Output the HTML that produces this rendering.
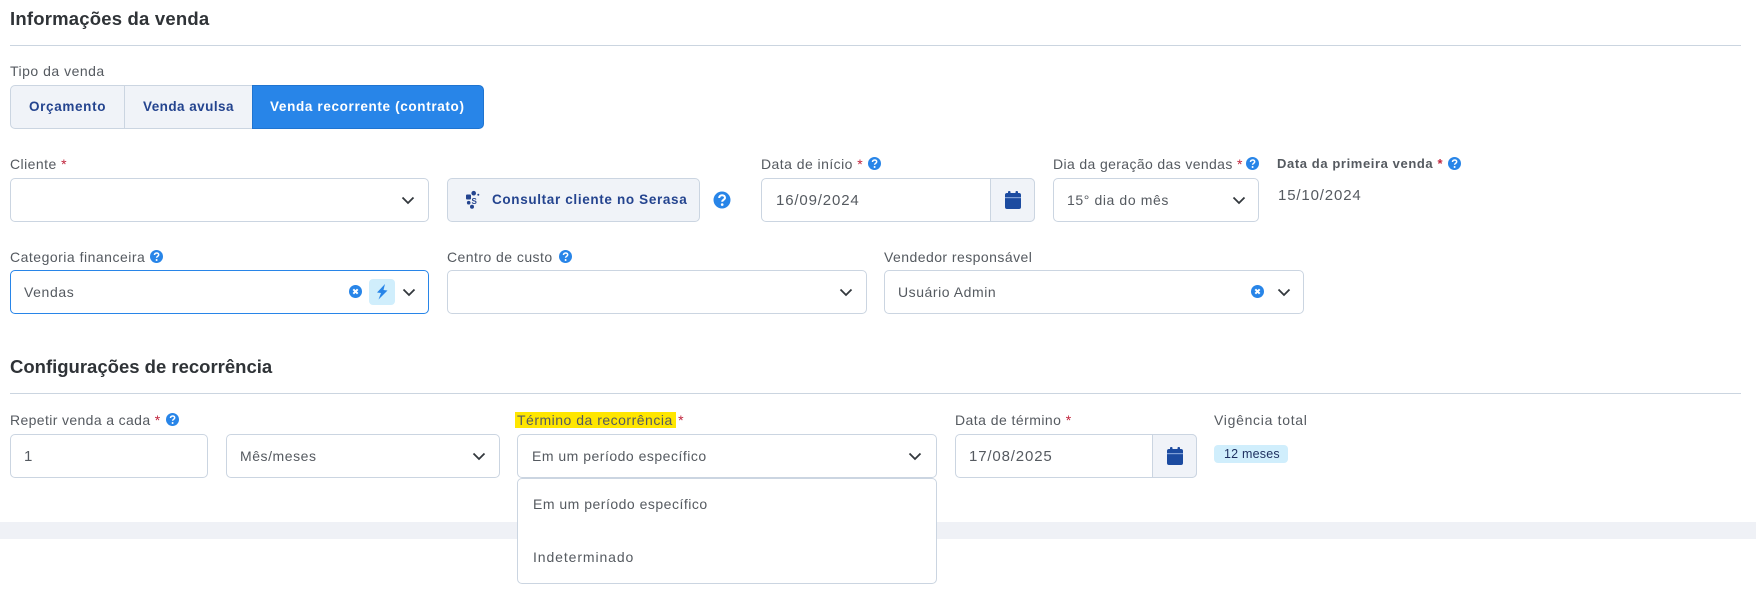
<!DOCTYPE html>
<html lang="pt"><head><meta charset="utf-8"><title>Informações da venda</title>
<style>
html,body{margin:0;padding:0;background:#fff}
#p{position:relative;width:1756px;height:597px;overflow:hidden;background:#fff;font-family:"Liberation Sans",sans-serif;color:#4a4f55}
#p>*{position:absolute;box-sizing:border-box}
.t{white-space:nowrap;font-size:14px;line-height:18px;letter-spacing:.45px;color:#555a60}
.d{font-size:15px;letter-spacing:.85px}
.btn{color:#24448f;font-weight:bold;font-size:13.5px;letter-spacing:.65px}
.h{white-space:nowrap;font-size:18.5px;line-height:24px;color:#2f3337;font-weight:bold}
.r{color:#c0243c}
.l{height:1px;background:#cbd5e0;left:10px;width:1731px}
.b{border:1px solid #cbd5e1;border-radius:5px;background:#fff;height:44px}
.g{background:#f0f3f8}
svg{position:absolute;overflow:visible}
</style></head><body><div id="p">
<div class="h" style="left:10px;top:7px;letter-spacing:.2px">Informações da venda</div>
<div class="l" style="top:45px"></div>
<div class="t" style="left:10px;top:62px;letter-spacing:.5px">Tipo da venda</div>
<div class="b g" style="left:10px;top:85px;width:116px;border-radius:5px 0 0 5px"></div>
<div class="b g" style="left:124px;top:85px;width:129px;border-radius:0"></div>
<div style="left:252px;top:85px;width:232px;height:44px;background:#2885e8;border:1px solid #1f74d0;border-radius:0 5px 5px 0"></div>
<div class="t btn" style="left:29px;top:98px">Orçamento</div>
<div class="t btn" style="left:143px;top:98px;letter-spacing:.45px">Venda avulsa</div>
<div class="t btn" style="left:270px;top:98px;color:#fff">Venda recorrente (contrato)</div>

<div class="t" style="left:10px;top:155px">Cliente <span class="r">*</span></div>
<div class="b" style="left:10px;top:178px;width:419px"></div>
<svg style="left:401px;top:196px" width="14" height="9"><use href="#v"/></svg>
<div class="b g" style="left:447px;top:178px;width:253px"></div>
<svg style="left:465px;top:190px" width="16" height="20"><g fill="#24448f"><rect x="1" y="4.500" width="5" height="5" rx="1"/><circle cx="8.700" cy="3.200" r="2.300"/><circle cx="13.300" cy="4.700" r="1"/><circle cx="3.700" cy="12.700" r="1.800"/><circle cx="7" cy="16.800" r="2"/><text x="6.500" y="14" font-family="Liberation Sans" font-size="8" font-weight="bold">S</text></g></svg>
<div class="t btn" style="left:492px;top:191px">Consultar cliente no Serasa</div>
<svg style="left:713px;top:191px" width="18" height="18"><circle cx="9" cy="9" r="8.500" fill="#2885e8"/><path d="M6.200 7c0-3.700 5.800-3.700 5.800-.2 0 2-2.800 2-2.800 3.900" fill="none" stroke="#fff" stroke-width="2"/><circle cx="9.200" cy="13.600" r="1.300" fill="#fff"/></svg>

<div class="t" style="left:761px;top:155px">Data de início <span class="r">*</span></div>
<svg style="left:868px;top:157px" width="13" height="13"><use href="#q"/></svg>
<div class="b" style="left:761px;top:178px;width:274px"></div>
<div class="b g" style="left:990px;top:178px;width:45px;border-radius:0 5px 5px 0"></div>
<svg style="left:1005px;top:191px" width="16" height="18"><use href="#c"/></svg>
<div class="t d" style="left:776px;top:192px">16/09/2024</div>

<div class="t" style="left:1053px;top:155px;letter-spacing:.37px">Dia da geração das vendas <span class="r">*</span></div>
<svg style="left:1246px;top:157px" width="13" height="13"><use href="#q"/></svg>
<div class="b" style="left:1053px;top:178px;width:206px"></div>
<div class="t" style="left:1067px;top:191px;letter-spacing:.6px">15° dia do mês</div>
<svg style="left:1232px;top:196px" width="14" height="9"><use href="#v"/></svg>

<div class="t" style="left:1277px;top:155px;font-weight:bold;font-size:13px;letter-spacing:.6px">Data da primeira venda <span class="r">*</span></div>
<svg style="left:1448px;top:157px" width="13" height="13"><use href="#q"/></svg>
<div class="t d" style="left:1278px;top:187px">15/10/2024</div>

<div class="t" style="left:10px;top:248px;letter-spacing:.5px">Categoria financeira</div>
<svg style="left:150px;top:250px" width="13" height="13"><use href="#q"/></svg>
<div class="b" style="left:10px;top:270px;width:419px;border-color:#2885e8"></div>
<div class="t" style="left:24px;top:283px;letter-spacing:.6px">Vendas</div>
<svg style="left:349px;top:285px" width="13" height="13"><use href="#x"/></svg>
<div style="left:369px;top:279px;width:26px;height:26px;border-radius:4px;background:#d0eefc"></div>
<svg style="left:375px;top:284px" width="14" height="16"><path d="M10 0L2 8.500l4 .5L3.500 15.500 12.500 6.500 8.500 6z" fill="#2885e8"/></svg>
<svg style="left:402px;top:288px" width="14" height="9"><use href="#v"/></svg>

<div class="t" style="left:447px;top:248px">Centro de custo</div>
<svg style="left:559px;top:250px" width="13" height="13"><use href="#q"/></svg>
<div class="b" style="left:447px;top:270px;width:420px"></div>
<svg style="left:839px;top:288px" width="14" height="9"><use href="#v"/></svg>

<div class="t" style="left:884px;top:248px">Vendedor responsável</div>
<div class="b" style="left:884px;top:270px;width:420px"></div>
<div class="t" style="left:898px;top:283px;letter-spacing:.55px">Usuário Admin</div>
<svg style="left:1251px;top:285px" width="13" height="13"><use href="#x"/></svg>
<svg style="left:1277px;top:288px" width="14" height="9"><use href="#v"/></svg>

<div class="h" style="left:10px;top:355px">Configurações de recorrência</div>
<div class="l" style="top:393px"></div>

<div class="t" style="left:10px;top:411px;letter-spacing:.37px">Repetir venda a cada <span class="r">*</span></div>
<svg style="left:166px;top:413px" width="13" height="13"><use href="#q"/></svg>
<div class="b" style="left:10px;top:434px;width:198px"></div>
<div class="t d" style="left:24px;top:448px">1</div>
<div class="b" style="left:226px;top:434px;width:274px"></div>
<div class="t" style="left:240px;top:447px;letter-spacing:.55px">Mês/meses</div>
<svg style="left:472px;top:452px" width="14" height="9"><use href="#v"/></svg>

<div style="left:515px;top:412px;width:161px;height:16px;background:#ffe600"></div>
<div class="t" style="left:517px;top:411px;letter-spacing:.5px">Término da recorrência <span class="r" style="margin-left:1px">*</span></div>
<div class="b" style="left:517px;top:434px;width:420px"></div>
<div class="t" style="left:532px;top:447px;letter-spacing:.5px">Em um período específico</div>
<svg style="left:908px;top:452px" width="14" height="9"><use href="#v"/></svg>

<div class="t" style="left:955px;top:411px">Data de término <span class="r">*</span></div>
<div class="b" style="left:955px;top:434px;width:242px"></div>
<div class="b g" style="left:1152px;top:434px;width:45px;border-radius:0 5px 5px 0"></div>
<svg style="left:1167px;top:447px" width="16" height="18"><use href="#c"/></svg>
<div class="t d" style="left:969px;top:448px">17/08/2025</div>

<div class="t" style="left:1214px;top:411px;letter-spacing:.7px">Vigência total</div>
<div style="left:1214px;top:445px;width:74px;height:18px;border-radius:4px;background:#d0eefc"></div>
<div class="t" style="left:1224px;top:445px;font-size:12.5px;letter-spacing:.2px;color:#1d2f5f">12 meses</div>

<div style="left:0;top:522px;width:1756px;height:17px;background:#eff1f6"></div>
<div class="b" style="left:517px;top:478px;width:420px;height:106px"></div>
<div class="t" style="left:533px;top:495px;letter-spacing:.5px">Em um período específico</div>
<div class="t" style="left:533px;top:548px;letter-spacing:.9px">Indeterminado</div>

<svg style="left:0;top:0" width="0" height="0"><defs>
<path id="v" d="M1.500 1.500L7 7l5.500-5.500" fill="none" stroke="#33383d" stroke-width="1.800"/>
<g id="q"><circle cx="6.500" cy="6.500" r="6.500" fill="#2885e8"/><path d="M4.500 5c0-2.700 4.200-2.700 4.200-.2 0 1.500-2.100 1.500-2.100 2.900" fill="none" stroke="#fff" stroke-width="1.500"/><circle cx="6.600" cy="10" r="1" fill="#fff"/></g>
<g id="x"><circle cx="6.500" cy="6.500" r="6.500" fill="#2885e8"/><path d="M4.300 4.300l4.400 4.400m0-4.400L4.300 8.700" stroke="#fff" stroke-width="2"/></g>
<g id="c"><rect x="3" y="0" width="2.500" height="4" rx="1" fill="#1c4ba0"/><rect x="10.500" y="0" width="2.500" height="4" rx="1" fill="#1c4ba0"/><rect x="0" y="2" width="16" height="16" rx="2" fill="#1c4ba0"/><rect x="0" y="6" width="16" height="1.200" fill="#7f9fd6"/></g>
</defs></svg>
</div></body></html>
